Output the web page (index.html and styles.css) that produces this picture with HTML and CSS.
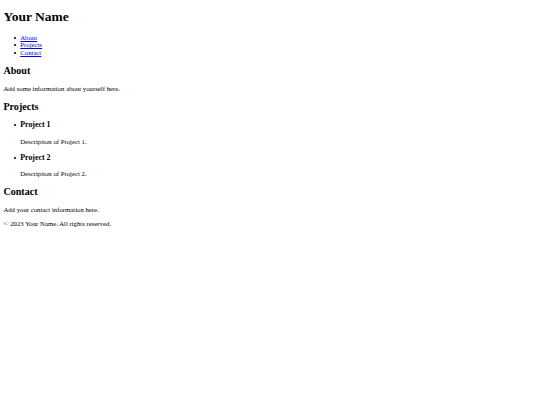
FILE: index.html
```html
<!DOCTYPE html>
<html lang="en">
<head>
<meta charset="utf-8">
<title>Your Name</title>
<link rel="stylesheet" href="styles.css">
</head>
<body class="page">
  <header class="site-header">
    <h1 class="site-title">Your Name</h1>
    <nav class="site-nav">
      <ul class="nav-list">
        <li class="nav-item"><a href="#about">About</a></li>
        <li class="nav-item"><a href="#projects">Projects</a></li>
        <li class="nav-item"><a href="#contact">Contact</a></li>
      </ul>
    </nav>
  </header>
  <main>
    <section id="about" class="section">
      <h2 class="section-title">About</h2>
      <p class="text">Add some information about yourself here.</p>
    </section>
    <section id="projects" class="section">
      <h2 class="section-title">Projects</h2>
      <ul class="project-list">
        <li class="project">
          <h3 class="project-title">Project 1</h3>
          <p class="text">Description of Project 1.</p>
        </li>
        <li class="project">
          <h3 class="project-title">Project 2</h3>
          <p class="text">Description of Project 2.</p>
        </li>
      </ul>
    </section>
    <section id="contact" class="section">
      <h2 class="section-title">Contact</h2>
      <p class="text">Add your contact information here.</p>
    </section>
  </main>
  <footer class="site-footer">
    <p class="text">&copy; 2023 Your Name. All rights reserved.</p>
  </footer>
</body>
</html>
```

FILE: styles.css
```css
/* A default-styled page, drawn at 0.421875 of its 1280px size */
.page {
  margin: 0 3.375px 3.375px;
  background: #ffffff;
  font-family: "Liberation Serif", "Times New Roman", serif;
  font-size: 6.75px;
  line-height: 7.594px;
  color: #000000;
}

.site-title {
  font-size: 13.5px;
  line-height: 15.61px;
  font-weight: bold;
  margin: 9.045px 0;
}

.section-title {
  font-size: 10.125px;
  line-height: 11.39px;
  font-weight: bold;
  margin: 8.404px 0;
}

.project-title {
  font-size: 7.898px;
  line-height: 9.281px;
  font-weight: bold;
  margin: 7.898px 0;
}

.text {
  margin: 6.75px 0;
}

.nav-list,
.project-list {
  margin: 6.75px 0;
  padding-left: 16.875px;
  list-style: none;
}

.nav-item,
.project {
  position: relative;
}

.nav-item::before,
.project::before {
  content: "";
  position: absolute;
  left: -6.75px;
  width: 2px;
  height: 2px;
  border-radius: 50%;
  background: #000000;
}

.nav-item::before {
  top: 3px;
}

.project::before {
  top: 3.8px;
}

.nav-item a {
  color: #0000ee;
  text-decoration: underline;
}
```
